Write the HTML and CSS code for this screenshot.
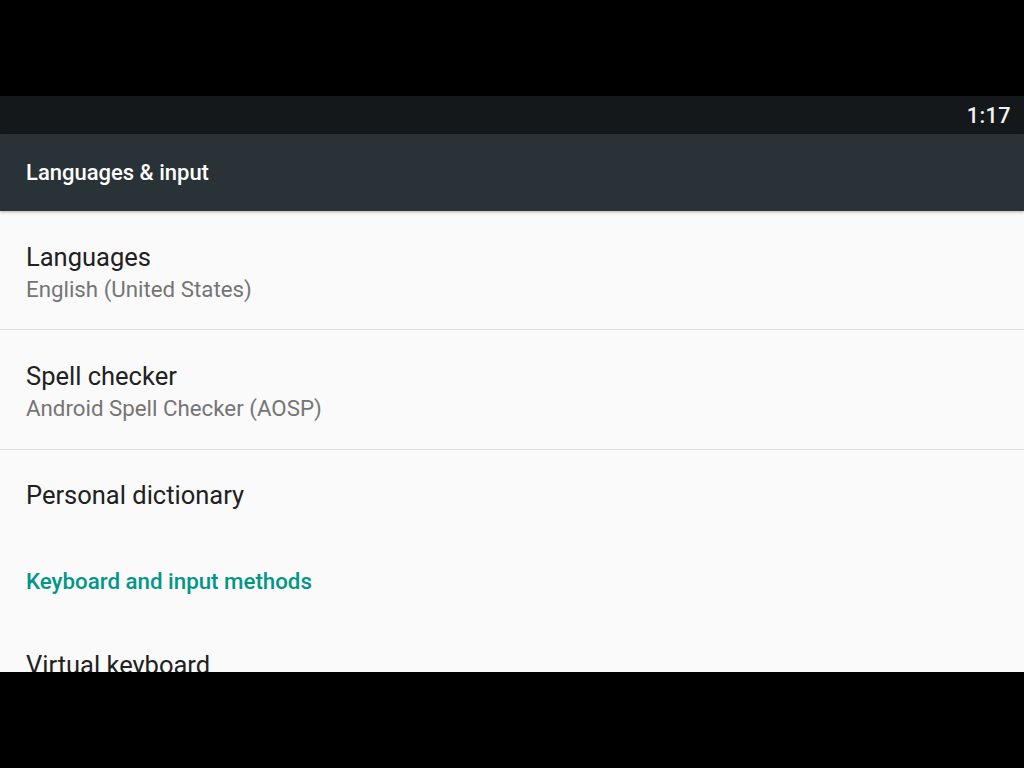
FILE: index.html
```html
<!DOCTYPE html>
<html lang="en">
<head>
    <meta charset="UTF-8">
    <meta name="viewport" content="width=device-width, initial-scale=1.0">
    <title>Languages &amp; input</title>
    <link rel="stylesheet" href="styles.css">
</head>
<body>

    <div class="screen">
        <div class="status-bar">
            <span class="clock">1:17</span>
        </div>
        <header class="toolbar">
            <h1>Languages &amp; input</h1>
        </header>

        <div class="content">
            <div class="pref two-line">
                <div class="pref-title">Languages</div>
                <div class="pref-summary">English (United States)</div>
            </div>
            <div class="pref two-line">
                <div class="pref-title">Spell checker</div>
                <div class="pref-summary">Android Spell Checker (AOSP)</div>
            </div>
            <div class="pref one-line">
                <div class="pref-title">Personal dictionary</div>
            </div>
            <div class="category">Keyboard and input methods</div>
            <div class="pref one-line">
                <div class="pref-title">Virtual keyboard</div>
            </div>
        </div>
    </div>

</body>
</html>
```

FILE: styles.css
```css
body {
    margin: 0;
    padding: 0;
    background: #000;
    font-family: Roboto, "Noto Sans", sans-serif;
}

.screen {
    margin-top: 96px;
    height: 576px;
    overflow: hidden;
    display: flex;
    flex-direction: column;
    background-color: #fafafa;
}

.status-bar {
    height: 38px;
    flex-shrink: 0;
    background-color: #15181b;
    display: flex;
    justify-content: flex-end;
    align-items: center;
    padding-right: 13px;
}

.clock {
    color: #f2f2f2;
    font-size: 21.5px;
    font-weight: 500;
    letter-spacing: 0.5px;
}

.toolbar {
    height: 77px;
    flex-shrink: 0;
    background-color: #283237;
    display: flex;
    align-items: center;
    padding-left: 26px;
    box-shadow: 0 1px 3px rgba(0, 0, 0, 0.3);
    position: relative;
    z-index: 1;
}

.toolbar h1 {
    margin: 0;
    color: #fff;
    font-size: 22px;
    font-weight: 500;
}

.content {
    flex: 1;
}

.pref {
    padding-left: 26px;
    box-sizing: border-box;
}

.two-line {
    padding-top: 30px;
    padding-bottom: 24px;
    border-bottom: 1px solid #dcdcdc;
}

.two-line + .two-line {
    padding-bottom: 25px;
}

.one-line {
    height: 90px;
    display: flex;
    align-items: center;
}

.pref-title {
    color: #212121;
    font-size: 25.5px;
    line-height: 32px;
}

.pref-summary {
    color: #757575;
    font-size: 22.3px;
    line-height: 32px;
}

.category {
    padding: 25px 0 23px 26px;
    color: #009688;
    font-size: 22.3px;
    font-weight: 500;
    line-height: 32px;
}
```
